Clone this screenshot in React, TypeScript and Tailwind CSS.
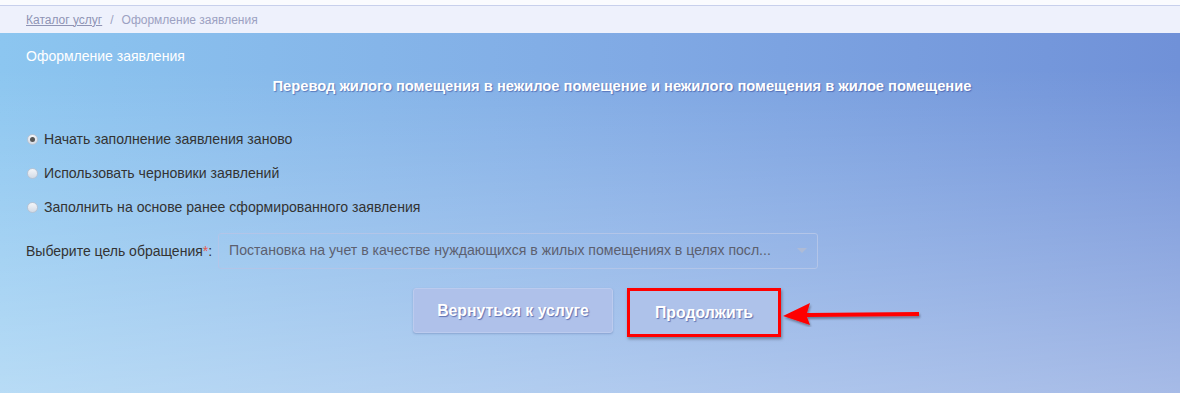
import React, { useState } from "react";

const options = [
  "Начать заполнение заявления заново",
  "Использовать черновики заявлений",
  "Заполнить на основе ранее сформированного заявления",
];

function Radio({ checked }: { checked: boolean }) {
  return (
    <span className="w-[11px] h-[11px] rounded-full border border-[#b8c4d4] bg-[linear-gradient(to_bottom,#f4f6f9,#d3dbe6)] flex items-center justify-center shrink-0">
      {checked && <span className="w-[5px] h-[5px] rounded-full bg-[#555]" />}
    </span>
  );
}

export default function App() {
  const [mode, setMode] = useState(0);

  return (
    <div className="w-[1180px] h-[393px] overflow-hidden font-['Liberation_Sans',Arial,sans-serif] bg-[#fafbfe]">
      <div className="h-[6px] border-b border-[#c8d0ec]" />
      <div className="h-[27px] bg-[#eef1fc] flex items-center px-[26px] text-[12px] text-[#9ca1c2] gap-[8px]">
        <span className="underline text-[#8f94b5]">Каталог услуг</span>
        <span>/</span>
        <span>Оформление заявления</span>
      </div>

      <div className="relative h-[360px] bg-[linear-gradient(to_bottom,rgba(255,255,255,0)_10%,rgba(255,255,255,0.38)),linear-gradient(to_right,#8cc6f0,#80a9e4_55%,#7091d8)] px-[26px] pt-[15px]">
        <div className="text-[14px] text-white leading-[16px]">Оформление заявления</div>
        <div className="mt-[14px] text-center text-[14.7px] font-bold text-white leading-[16px] pl-[64px] [text-shadow:1px_1px_1px_rgba(50,70,150,0.55)]">
          Перевод жилого помещения в нежилое помещение и нежилого помещения в жилое помещение
        </div>

        <div className="mt-[37px] flex flex-col gap-[18px] pl-[1px]">
          {options.map((o, i) => (
            <label
              key={o}
              className="flex items-center gap-[6px] text-[14.1px] leading-[16px] text-[#333] cursor-pointer"
              onClick={() => setMode(i)}
            >
              <Radio checked={mode === i} />
              <span>{o}</span>
            </label>
          ))}
        </div>

        <div className="mt-[18px] flex items-center">
          <div className="w-[192px] text-[14px] text-[#333]">
            Выберите цель обращения<span className="text-[#e85a4f]">*</span>:
          </div>
          <div className="w-[600px] h-[36px] border border-[#b3c5e8] rounded-[3px] flex items-center justify-between pl-[10px] pr-[10px]">
            <span className="text-[14.1px] text-[#5c6070]">
              Постановка на учет в качестве нуждающихся в жилых помещениях в целях посл...
            </span>
            <svg width="10" height="6" viewBox="0 0 10 6">
              <path d="M0 0h10L5 5z" fill="#aebbd6" />
            </svg>
          </div>
        </div>

        <div className="mt-[19px] flex justify-center gap-[14px] pl-[14px]">
          <button className="w-[200px] h-[45px] rounded-[3px] bg-[#afc1ea] border border-[#bccbee] shadow-[0_1px_2px_rgba(60,80,140,0.3)] text-white font-bold text-[15.8px] [text-shadow:1px_1px_1px_rgba(40,60,140,0.6)]">
            Вернуться к услуге
          </button>
          <div className="relative">
            <button className="w-[154px] h-[49px] border-[3px] border-[#ff0000] bg-[#aec2ea] text-white font-bold text-[15.8px] [text-shadow:1px_1px_1px_rgba(40,60,140,0.6)] shadow-[1px_2px_3px_rgba(0,0,0,0.35)]">
              Продолжить
            </button>
            <svg
              className="absolute left-[153px] top-[7px]"
              width="145"
              height="32"
              viewBox="0 0 145 32"
            >
              <g filter="url(#sh)">
                <path d="M3 21 L30 8 L27 18 L139 17 L139 21 L27 22 L30 30 Z" fill="#ff0000" />
              </g>
              <defs>
                <filter id="sh" x="-10%" y="-30%" width="130%" height="170%">
                  <feDropShadow dx="1" dy="2" stdDeviation="1" floodColor="#000" floodOpacity="0.35" />
                </filter>
              </defs>
            </svg>
          </div>
        </div>
      </div>
    </div>
  );
}
